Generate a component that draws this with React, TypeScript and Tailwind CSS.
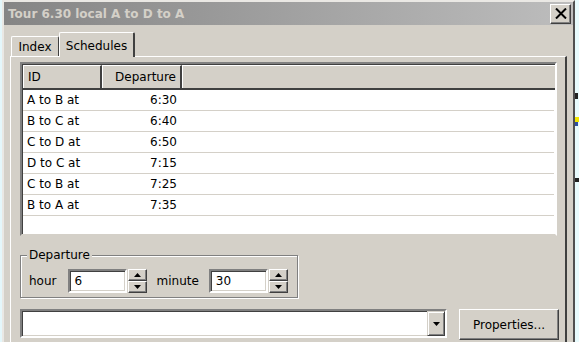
import React from "react";

const rows: [string, string][] = [
  ["A to B at", "6:30"],
  ["B to C at", "6:40"],
  ["C to D at", "6:50"],
  ["D to C at", "7:15"],
  ["C to B at", "7:25"],
  ["B to A at", "7:35"],
];

function Tri({ down }: { down?: boolean }) {
  return (
    <svg width="7" height="4" viewBox="0 0 7 4" className="block">
      {down ? <path d="M0 0h7L3.5 4z" fill="#000" /> : <path d="M0 4h7L3.5 0z" fill="#000" />}
    </svg>
  );
}

function SpinBtn({ down }: { down?: boolean }) {
  return (
    <div className="h-[12px] w-[19px] flex items-center justify-center bg-[#d4d0c8] border border-t-white border-l-white border-r-[#404040] border-b-[#404040] shadow-[inset_-1px_-1px_0_#808080]">
      <Tri down={down} />
    </div>
  );
}

function SpinEdit({ value, w }: { value: string; w: string }) {
  return (
    <div className="flex items-center gap-[1px]">
      <div
        className={`${w} h-[24px] bg-white border-2 border-t-[#808080] border-l-[#808080] border-r-white border-b-white shadow-[inset_1px_1px_0_#404040,inset_-1px_-1px_0_#d4d0c8] flex items-center pl-[5px]`}
      >
        {value}
      </div>
      <div className="flex flex-col">
        <SpinBtn />
        <SpinBtn down />
      </div>
    </div>
  );
}

export default function App() {
  return (
    <div className="w-[579px] h-[342px] overflow-hidden flex bg-[#e8fbfd] font-['DejaVu_Sans',sans-serif] text-[12px] text-black">
      {/* left desktop strip */}
      <div className="w-[2px] shrink-0 bg-[#e4f7fb]" />
      {/* window */}
      <div className="w-[573px] shrink-0 flex flex-col bg-[#d4d0c8] border-t-2 border-l-2 border-r-2 border-t-[#eae8e4] border-l-[#eae8e4] border-r-[#505050]">
        {/* title bar */}
        <div className="h-[23px] shrink-0 flex items-center justify-between pl-[4px] pr-[2px] bg-linear-to-r from-[#858585] to-[#bdbdbd]">
          <span className="font-bold text-[12px] text-[#d4d0c8] leading-none">Tour 6.30 local A to D to A</span>
          <div className="w-[21px] h-[20px] flex items-center justify-center bg-[#d4d0c8] border border-t-white border-l-white border-r-[#404040] border-b-[#404040] shadow-[inset_-1px_-1px_0_#808080]">
            <svg width="12" height="11" viewBox="0 0 12 11">
              <path d="M1 0.5L11 10.5M11 0.5L1 10.5" stroke="#000" strokeWidth="2" />
            </svg>
          </div>
        </div>
        {/* body */}
        <div className="flex-1 flex flex-col pt-[7px] pl-[6px]">
          {/* tabs */}
          <div className="flex items-end h-[24px] pl-[1px]">
            <div className="w-[48px] h-[20px] flex items-center justify-center border-t border-l border-white border-r border-r-[#404040] rounded-t-[2px] pt-[1px]">
              Index
            </div>
            <div className="relative z-10 w-[76px] h-[25px] -mb-[1px] bg-[#d4d0c8] flex items-start justify-center pt-[4px] border-t border-l border-white border-r-2 border-r-[#404040] rounded-t-[2px]">
              Schedules
            </div>
          </div>
          {/* panel */}
          <div className="w-[557px] flex-1 border-t border-l border-white border-r-2 border-r-[#404040] pt-[5px] pl-[9px]">
            {/* list view */}
            <div className="w-[537px] h-[174px] bg-white border-2 border-t-[#808080] border-l-[#808080] border-r-white border-b-[#d4d0c8] shadow-[inset_1px_1px_0_#404040] flex flex-col pt-[1px] pl-[1px]">
              <div className="h-[25px] shrink-0 flex bg-[#d4d0c8] border-b-2 border-b-[#404040]">
                <div className="w-[79px] h-full flex items-center pl-[4px] border-t border-l border-white border-r-2 border-r-[#404040]">
                  ID
                </div>
                <div className="w-[80px] h-full flex items-center justify-end pr-[4px] border-t border-l border-white border-r-2 border-r-[#404040]">
                  Departure
                </div>
                <div className="flex-1 h-full border-t border-l border-white" />
              </div>
              {rows.map(([id, t]) => (
                <div key={id} className="h-[21px] shrink-0 flex items-center border-b border-b-[#d4d0c8] mr-[1px]">
                  <div className="w-[79px] pl-[4px]">{id}</div>
                  <div className="w-[75px] text-right">{t}</div>
                </div>
              ))}
            </div>
            {/* group box */}
            <div className="relative mt-[19px] w-[278px] h-[43px] border border-[#808080] shadow-[inset_1px_1px_0_#fff,1px_1px_0_#fff] pt-[13px] pl-[8px]">
              <span className="absolute -top-[9px] left-[6px] bg-[#d4d0c8] px-[2px] leading-[16px]">Departure</span>
              <div className="flex items-center">
                <span className="mr-[11px]">hour</span>
                <SpinEdit value="6" w="w-[59px]" />
                <span className="ml-[10px] mr-[10px]">minute</span>
                <SpinEdit value="30" w="w-[59px]" />
              </div>
            </div>
            {/* combo + button */}
            <div className="flex items-start mt-[11px]">
              <div className="w-[427px] h-[29px] bg-white border-2 border-t-[#808080] border-l-[#808080] border-r-white border-b-white shadow-[inset_1px_1px_0_#404040,inset_-1px_-1px_0_#d4d0c8] flex justify-end">
                <div className="w-[18px] h-full flex items-center justify-center bg-[#d4d0c8] border border-t-[#d4d0c8] border-l-[#d4d0c8] border-r-[#404040] border-b-[#404040] shadow-[inset_1px_1px_0_#fff,inset_-1px_-1px_0_#808080]">
                  <Tri down />
                </div>
              </div>
              <div className="ml-[12px] w-[100px] h-[31px] flex items-center justify-center border border-t-white border-l-white border-r-[#404040] border-b-[#404040] shadow-[inset_-1px_-1px_0_#808080]">
                Properties...
              </div>
            </div>
          </div>
        </div>
      </div>
      {/* right desktop strip */}
      <div className="w-[4px] shrink-0 flex flex-col bg-[#e8fbfd]">
        <div className="h-[93px]" />
        <div className="h-[6px] w-[3px] bg-[#222]" />
        <div className="h-[18px]" />
        <div className="h-[5px] bg-[#f2e600]" />
        <div className="h-[4px] w-[3px] bg-[#3050a0]" />
        <div className="h-[52px]" />
        <div className="h-[4px] bg-[#222]" />
      </div>
    </div>
  );
}
